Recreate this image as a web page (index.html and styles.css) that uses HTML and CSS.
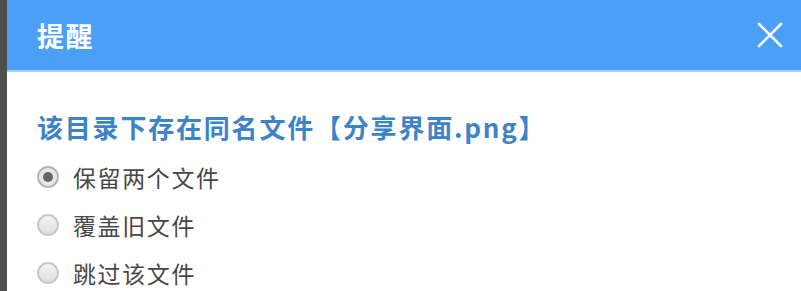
FILE: index.html
```html
<!DOCTYPE html>
<html lang="zh-CN">
<head>
    <meta charset="UTF-8">
    <title>提醒</title>
    <link rel="stylesheet" href="styles.css">
</head>
<body>
<div class="dialog">
    <div class="dialog-header">
        <span class="dialog-title">提醒</span>
        <span class="dialog-close">
            <svg width="26" height="26" viewBox="0 0 26 26">
                <path d="M2 2 L24 24 M24 2 L2 24" stroke="#fff" stroke-width="2.6" stroke-linecap="round"/>
            </svg>
        </span>
    </div>
    <div class="dialog-body">
        <p class="conflict-msg">该目录下存在同名文件【分享界面.png】</p>
        <label class="option"><span class="radio checked"></span>保留两个文件</label>
        <label class="option"><span class="radio"></span>覆盖旧文件</label>
        <label class="option"><span class="radio"></span>跳过该文件</label>
    </div>
</div>
</body>
</html>
```

FILE: styles.css
```css
body {
    margin: 0;
    font-family: "Noto Sans CJK SC", "Liberation Sans", sans-serif;
    background-color: #fff;
}

.dialog {
    border-left: 7px solid #4e4e4e;
    min-height: 100vh;
    box-sizing: border-box;
}

.dialog-header {
    height: 72px;
    background-color: #4ba0f6;
    border-bottom: 2px solid #9fd0fb;
    box-sizing: border-box;
    display: flex;
    align-items: center;
    justify-content: space-between;
    padding: 0 18px 0 30px;
}

.dialog-title {
    color: #fff;
    font-size: 27px;
    font-weight: bold;
    letter-spacing: 1.5px;
}

.dialog-close {
    display: flex;
}

.dialog-body {
    padding: 35px 0 0 30px;
}

.conflict-msg {
    margin: 0 0 6px;
    color: #3d83c7;
    font-size: 26px;
    font-weight: bold;
    line-height: 40px;
    letter-spacing: 1.8px;
}

.option {
    display: flex;
    align-items: center;
    height: 48px;
    color: #484848;
    font-size: 23px;
    line-height: 30px;
    letter-spacing: 1.6px;
}

.radio {
    width: 18px;
    height: 18px;
    border-radius: 50%;
    border: 2px solid #c8c8c8;
    background: linear-gradient(#f4f4f4, #dcdcdc);
    margin-right: 14px;
    display: flex;
    align-items: center;
    justify-content: center;
}

.radio.checked {
    border-color: #b4b4b4;
    background: #e8e8e8;
}

.radio.checked::after {
    content: "";
    width: 10px;
    height: 10px;
    border-radius: 50%;
    background-color: #666;
}
```
